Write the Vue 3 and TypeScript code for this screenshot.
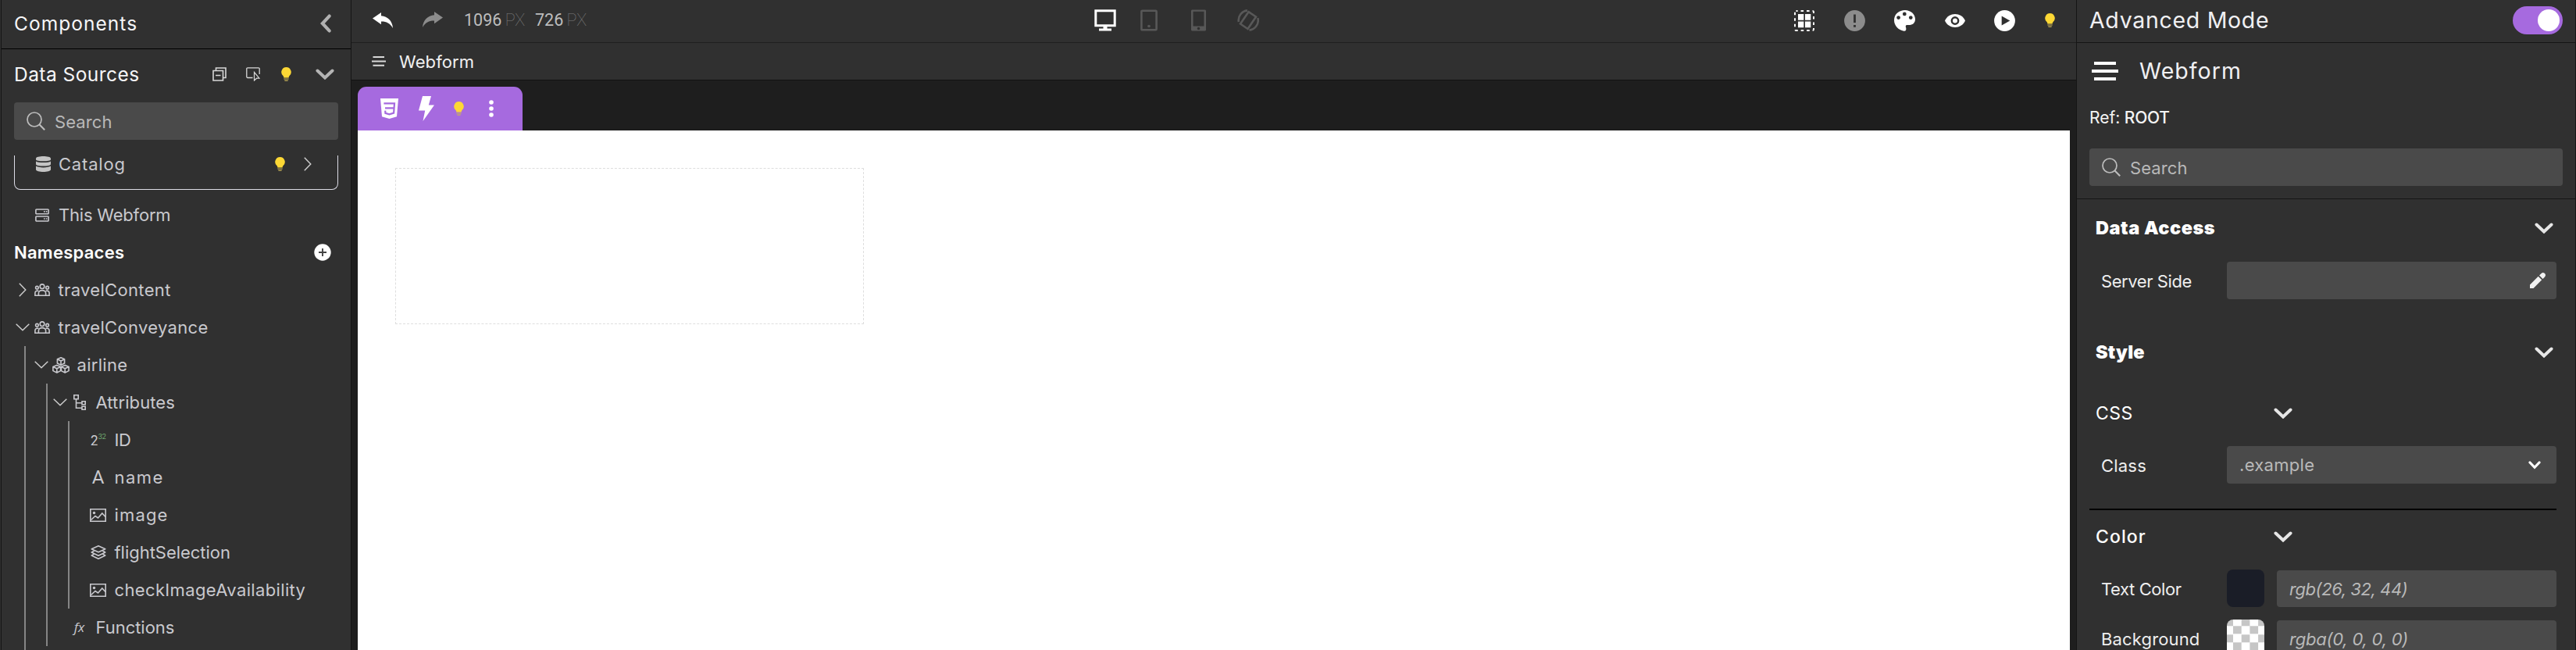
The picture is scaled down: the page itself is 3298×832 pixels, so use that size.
<script setup lang="ts">
interface TreeNode {
  label: string
  level: number
  icon: string
  open?: boolean
  closed?: boolean
}

const nodes: TreeNode[] = [
  { label: 'travelContent', level: 0, icon: 'users', closed: true },
  { label: 'travelConveyance', level: 0, icon: 'users', open: true },
  { label: 'airline', level: 1, icon: 'cubes', open: true },
  { label: 'Attributes', level: 2, icon: 'hierarchy', open: true },
  { label: 'ID', level: 3, icon: 'number' },
  { label: 'name', level: 3, icon: 'letter' },
  { label: 'image', level: 3, icon: 'picture' },
  { label: 'flightSelection', level: 3, icon: 'layers' },
  { label: 'checkImageAvailability', level: 3, icon: 'picture' },
  { label: 'Functions', level: 2, icon: 'fx' },
]
</script>

<template>
  <svg class="defs">
    <symbol id="bulb" viewBox="0 0 13 18">
      <path d="M6.5 0A6.3 6.3 0 0 0 2.6 11.2C3.2 11.8 3.3 12.6 3.3 13.6H9.7C9.7 12.6 9.8 11.8 10.4 11.2A6.3 6.3 0 0 0 6.5 0Z" fill="#fdd835" />
      <path d="M3.3 14.6H9.7V15.6H3.3ZM3.9 16.4H9.1L8.3 17.8H4.7Z" fill="#c9b458" />
    </symbol>
    <symbol id="down" viewBox="0 0 24 14">
      <path d="M2.5 2.5L12 11.5L21.5 2.5" fill="none" stroke="currentColor" stroke-width="4" stroke-linecap="round" />
    </symbol>
    <symbol id="thin-down" viewBox="0 0 18 10">
      <path d="M.7 .8L9 8.8L17.3 .8" fill="none" stroke="currentColor" stroke-width="1.4" />
    </symbol>
    <symbol id="thin-right" viewBox="0 0 10 18">
      <path d="M.8 .7L8.8 9L.8 17.3" fill="none" stroke="currentColor" stroke-width="1.4" />
    </symbol>
    <symbol id="search" viewBox="0 0 24 24">
      <circle cx="10" cy="10" r="9" fill="none" stroke="currentColor" stroke-width="1.7" />
      <path d="M16.3 16.3L23.2 23.2" stroke="currentColor" stroke-width="2.1" />
    </symbol>
    <symbol id="users" viewBox="0 0 20 16">
      <g fill="none" stroke="currentColor" stroke-width="1.6">
        <circle cx="10" cy="3.7" r="2.8" /><circle cx="3.4" cy="5.2" r="1.8" /><circle cx="16.6" cy="5.2" r="1.8" />
        <path d="M5.4 15.2V12.2A4.6 3.6 0 0 1 14.6 12.2V15.2ZM5.2 15.2H.9V12A2.9 2.9 0 0 1 5.4 9.6M14.8 15.2H19.1V12A2.9 2.9 0 0 0 14.6 9.6" />
      </g>
    </symbol>
    <symbol id="cubes" viewBox="0 0 22 21">
      <g fill="none" stroke="currentColor" stroke-width="1.6" stroke-linejoin="round">
        <path d="M11 .8L15.6 2.8V8L11 10.2L6.4 8V2.8ZM6.4 2.8L11 4.9L15.6 2.8M11 4.9V10.2" />
        <path d="M5.8 10.4L10.6 12.6V17.6L5.8 20L.9 17.6V12.6ZM.9 12.6L5.8 14.8L10.6 12.6M5.8 14.8V20" />
        <path d="M16.2 10.4L21.1 12.6V17.6L16.2 20L11.4 17.6V12.6ZM11.4 12.6L16.2 14.8L21.1 12.6M16.2 14.8V20" />
      </g>
    </symbol>
    <symbol id="hierarchy" viewBox="0 0 16 20">
      <path d="M.8 .8H6.2V5.8H.8ZM11 8.8H15.2V12.8H11ZM11 15.2H15.2V19.2H11ZM3.5 5.8V17.2H11M3.5 10.8H11" fill="none" stroke="currentColor" stroke-width="1.6" />
    </symbol>
    <symbol id="picture" viewBox="0 0 21 17">
      <path d="M.8 .8H20.2V16.2H.8Z" fill="none" stroke="currentColor" stroke-width="1.6" />
      <circle cx="5.5" cy="5.5" r="1.7" fill="currentColor" />
      <path d="M1.5 14.5L7 9.5L10.5 12L15.8 6L20 10.5" fill="none" stroke="currentColor" stroke-width="1.6" />
    </symbol>
    <symbol id="layers" viewBox="0 0 20 18">
      <path d="M10 .8L18.8 4.8L10 8.8L1.2 4.8ZM4.6 7L1.2 9L10 13.2L18.8 9L15.4 7M4.6 11.2L1.2 13L10 17.2L18.8 13L15.4 11.2" fill="none" stroke="currentColor" stroke-width="1.5" stroke-linejoin="round" />
    </symbol>
    <symbol id="lines" viewBox="0 0 34 24">
      <path d="M3 0H31V4H3ZM0 10H34V14H0ZM3 20H31V24H3Z" fill="currentColor" />
    </symbol>
  </svg>

  <div class="app">
    <aside class="left">
      <header class="components">
        <span class="t title comp">Components</span>
        <svg class="back" viewBox="0 0 14 24"><path d="M11.6 2.6L2.9 12L11.6 21.4" fill="none" stroke="#b0b0b0" stroke-width="4.2" stroke-linecap="round" /></svg>
      </header>
      <div class="sources">
        <span class="t title ds">Data Sources</span>
        <svg class="collapse" viewBox="0 0 18 18"><path d="M4.5 4V1H17V13.5H13.5M1 4.5H13.5V17H1ZM4 10.5H10.5" fill="none" stroke="currentColor" stroke-width="1.6" /></svg>
        <svg class="inspect" viewBox="0 0 18 18"><path d="M8.5 13.5H2A1.2 1.2 0 0 1 .8 12.3V2A1.2 1.2 0 0 1 2 .8H16A1.2 1.2 0 0 1 17.2 2V9" fill="none" stroke="currentColor" stroke-width="1.3" /><path d="M10.5 6.5L17 14.2H13.6L10.5 17Z" fill="none" stroke="currentColor" stroke-width="1.2" /></svg>
        <svg class="bulb"><use href="#bulb" /></svg>
        <svg class="down grey"><use href="#down" /></svg>
      </div>
      <div class="search">
        <svg class="lens"><use href="#search" /></svg>
        <span class="t find">Search</span>
      </div>
      <div class="catalog">
        <svg class="db" viewBox="0 0 19 20"><path d="M0 2.9C0 -.9 19 -.9 19 2.9V4.2C19 7 0 7 0 4.2ZM0 6.4C3 8.6 16 8.6 19 6.4V10.2C19 13.4 0 13.4 0 10.2ZM0 12.6C3 15 16 15 19 12.6V17C19 21 0 21 0 17Z" fill="#c4c4c4" /></svg>
        <span class="t cat">Catalog</span>
        <svg class="bulb"><use href="#bulb" /></svg>
        <svg class="chev-right"><use href="#thin-right" /></svg>
      </div>
      <div class="webform-row">
        <svg class="server" viewBox="0 0 18 17"><path d="M1.8 1H16.2A.9 .9 0 0 1 17.1 2V5.8A.9 .9 0 0 1 16.2 6.8H1.8A.9 .9 0 0 1 .9 5.8V2A.9 .9 0 0 1 1.8 1ZM1.8 10H16.2A.9 .9 0 0 1 17.1 11V15A.9 .9 0 0 1 16.2 16H1.8A.9 .9 0 0 1 .9 15V11A.9 .9 0 0 1 1.8 10Z" fill="none" stroke="currentColor" stroke-width="1.6" /><path d="M11 3.1H12.6V4.7H11ZM13.8 3.1H15.4V4.7H13.8ZM11 12.2H12.6V13.8H11ZM13.8 12.2H15.4V13.8H13.8Z" fill="currentColor" /></svg>
        <span class="t thisweb">This Webform</span>
      </div>
      <div class="namespaces">
        <span class="t ns">Namespaces</span>
        <svg class="plus" viewBox="0 0 22 22"><circle cx="11" cy="11" r="10.7" fill="#fff" /><path d="M11 6V16M6 11H16" stroke="#444" stroke-width="1.9" /></svg>
      </div>
      <div class="tree">
        <i class="guide g1"></i><i class="guide g2"></i><i class="guide g3"></i>
        <div v-for="n in nodes" :key="n.label" class="node" :class="'level' + n.level">
          <span class="slot chev">
            <svg v-if="n.open" class="chev-down"><use href="#thin-down" /></svg>
            <svg v-else-if="n.closed" class="chev-right"><use href="#thin-right" /></svg>
          </span>
          <span class="slot icon">
            <span v-if="n.icon === 'number'" class="num">2<sup>32</sup></span>
            <span v-else-if="n.icon === 'letter'" class="letter">A</span>
            <span v-else-if="n.icon === 'fx'" class="fx">fx</span>
            <svg v-else :class="n.icon"><use :href="'#' + n.icon" /></svg>
          </span>
          <span class="t label" :class="'n-' + n.label">{{ n.label }}</span>
        </div>
      </div>
    </aside>

    <main class="center">
      <div class="toolbar">
        <div class="history">
          <svg class="undo" viewBox="0 0 26 20"><path d="M0 7.6L11 0V4.2C19.5 5 25.5 11 26 20C22 13.6 17.5 11.4 11 11.6V15.2Z" fill="#fff" /></svg>
          <svg class="redo" viewBox="0 0 26 20"><path d="M26 7.6L15 0V4.2C6.5 5 .5 11 0 20C4 13.6 8.5 11.4 15 11.6V15.2Z" fill="#8c8c8c" /></svg>
          <span class="dim">1096 <small>PX</small></span>
          <span class="dim">726 <small>PX</small></span>
        </div>
        <div class="devices">
          <svg width="28" height="28" viewBox="0 0 28 28"><path d="M1.8 1.8H26.2V20.8H1.8Z" fill="none" stroke="#fff" stroke-width="3" /><path d="M11.5 21H16.5V24.5H22V27.5H6V24.5H11.5Z" fill="#fff" /></svg>
          <svg width="22" height="28" viewBox="0 0 22 28"><rect x="1.4" y="1.7" width="19.2" height="24.6" rx="1" fill="none" stroke="#585858" stroke-width="2.6" /><circle cx="11" cy="21.5" r="1.8" fill="#585858" /></svg>
          <svg width="19" height="28" viewBox="0 0 19 28"><path fill-rule="evenodd" d="M1 .5H18L19 1.5V26.5L18 27.5H1L0 26.5V1.5ZM2.5 2.8V21.5H16.5V2.8ZM9.5 22.7A1.8 1.8 0 1 0 9.5 26.3A1.8 1.8 0 1 0 9.5 22.7Z" fill="#585858" /></svg>
          <svg width="28" height="28" viewBox="0 0 28 28"><g fill="none" stroke="#585858" stroke-width="2.6"><path d="M14.5 3.2L24 9.5L13.5 25L4 18.5Z" /><path d="M13 1.4A12.7 12.7 0 0 0 1.8 16M15.5 26.6A12.7 12.7 0 0 0 26.4 11" /></g></svg>
        </div>
        <div class="actions">
          <svg width="26" height="27" viewBox="0 0 26 27"><rect x="1" y="1" width="24" height="25" rx="1.5" fill="none" stroke="#fff" stroke-width="2" stroke-dasharray="3.6 3.9" stroke-dashoffset="1.5" /><path d="M5 5H12.3V12.7H5ZM14 5H21.3V12.7H14ZM5 14.5H12.3V22.2H5ZM14 14.5H21.3V22.2H14Z" fill="#fff" /></svg>
          <svg width="27" height="27" viewBox="0 0 27 27"><circle cx="13.5" cy="13.5" r="13.4" fill="#8c8c8c" /><path d="M12.1 5.5H14.9V16H12.1ZM12.1 19H14.9V21.8H12.1Z" fill="#303030" /></svg>
          <svg width="27" height="27" viewBox="0 0 27 27"><path fill-rule="evenodd" d="M14 0C21 0 27 5 27 11.5C27 17 23 19.5 17.5 19C14.5 18.8 14.5 20.5 15.2 22.5C16 25.5 14.5 27 12.5 26.7C5.5 25.8 0 19.5 0 13C0 5 6.5 0 14 0ZM13.3 2.5A2.4 2.4 0 1 0 13.3 7.3A2.4 2.4 0 1 0 13.3 2.5ZM5.6 7.2A2.4 2.4 0 1 0 5.6 12A2.4 2.4 0 1 0 5.6 7.2ZM21.3 7.2A2.4 2.4 0 1 0 21.3 12A2.4 2.4 0 1 0 21.3 7.2Z" fill="#fff" /></svg>
          <svg width="26" height="17" viewBox="0 0 26 17"><path d="M0 8.5C5 -2.8 21 -2.8 26 8.5C21 19.8 5 19.8 0 8.5Z" fill="#fff" /><circle cx="13" cy="8.5" r="4.2" fill="#fff" stroke="#303030" stroke-width="2.4" /></svg>
          <svg width="27" height="27" viewBox="0 0 27 27"><circle cx="13.5" cy="13.5" r="13.4" fill="#fff" /><path d="M9.7 7.5L20.3 13.5L9.7 19.5Z" fill="#303030" /></svg>
          <svg class="bulb"><use href="#bulb" /></svg>
        </div>
      </div>
      <div class="crumb">
        <svg class="lines-sm" viewBox="0 0 18 13"><path d="M1.5 0H16V2H1.5ZM0 5.4H18V7.4H0ZM1.5 10.8H16V12.8H1.5Z" fill="#d8d8d8" /></svg>
        <span class="t crumb-t">Webform</span>
      </div>
      <div class="stage">
        <div class="tab">
          <svg class="css3" viewBox="0 0 23 26"><path d="M0 0H23L21 23.2L11.5 26L2 23.2Z" fill="#fff" /><path d="M4.4 6.4H18L17.1 18.6L11.5 20.4L6.4 18.9L6.2 15.6M6 12.4H17.4" fill="none" stroke="#a66adf" stroke-width="2.2" /></svg>
          <svg class="bolt" viewBox="0 0 20 32"><path d="M5 0H16L12.8 11.5H20L5.5 32L8.2 18.5H0Z" fill="#fff" /></svg>
          <svg class="bulb"><use href="#bulb" /></svg>
          <svg class="dots" viewBox="0 0 6 22"><circle cx="3" cy="3" r="2.8" fill="#fff" /><circle cx="3" cy="11" r="2.8" fill="#fff" /><circle cx="3" cy="19" r="2.8" fill="#fff" /></svg>
        </div>
        <div class="canvas"><div class="drop"></div></div>
      </div>
    </main>

    <aside class="right">
      <header class="mode">
        <span class="t big adv">Advanced Mode</span>
        <span class="toggle"><i></i></span>
      </header>
      <div class="heading">
        <svg class="lines"><use href="#lines" /></svg>
        <span class="t big wf">Webform</span>
      </div>
      <div class="refrow"><span class="t ref">Ref:</span><b class="t root">ROOT</b></div>
      <div class="search rsearch">
        <svg class="lens"><use href="#search" /></svg>
        <span class="t find">Search</span>
      </div>
      <div class="section s-data"><b class="t da">Data Access</b><svg class="down"><use href="#down" /></svg></div>
      <div class="field f-server">
        <span class="t name ss">Server Side</span>
        <div class="input end"><svg class="pencil" viewBox="0 0 20 20"><path d="M0 15.5V20H4.5L15.2 9.3L10.7 4.8ZM12 3.5L16.5 8L19 5.4C20.3 4 20.3 2.4 19 1.1C17.6 -.3 16 -.3 14.6 .9Z" fill="#f2f2f2" /></svg></div>
      </div>
      <div class="section s-style"><b class="t st">Style</b><svg class="down"><use href="#down" /></svg></div>
      <div class="sub s-css"><span class="t css">CSS</span><svg class="down"><use href="#down" /></svg></div>
      <div class="field f-class">
        <span class="t name cl">Class</span>
        <div class="input"><span class="t ex">.example</span><svg class="caret" viewBox="0 0 16 11"><path d="M2 2L8 8.3L14 2" fill="none" stroke="#fff" stroke-width="3.2" stroke-linecap="round" /></svg></div>
      </div>
      <hr class="rule" />
      <div class="sub s-color"><span class="t co">Color</span><svg class="down"><use href="#down" /></svg></div>
      <div class="field f-text">
        <span class="t name tc">Text Color</span>
        <i class="swatch navy"></i>
        <div class="input short"><em class="t v1">rgb(26, 32, 44)</em></div>
      </div>
      <div class="field f-bg">
        <span class="t name bg">Background</span>
        <i class="swatch checker"></i>
        <div class="input short"><em class="t v2">rgba(0, 0, 0, 0)</em></div>
      </div>
    </aside>
  </div>
</template>

<style>
html, body { margin: 0; overflow: hidden; background: #1e1e1e; }
</style>

<style scoped>
* { box-sizing: border-box; }
svg { display: block; flex: none; }
.defs { position: absolute; width: 0; height: 0; }
.t { white-space: pre; }
.app { display: flex; width: 3298px; height: 832px; overflow: hidden; background: #1e1e1e; color: #c9c9ce; font-family: Inter, "Open Sans", sans-serif; font-size: 22px; line-height: 28px; }
.left { flex: none; width: 450px; height: 832px; overflow: hidden; padding-left: 1px; border-left: 1px solid #303030; border-right: 1px solid #151515; background: #303030; box-shadow: inset 1px 0 #151515; }
.title { font-size: 24.5px; color: #f6f6f8; }
.components { display: flex; align-items: center; justify-content: space-between; height: 63px; padding: 0 25px 2px 16px; border-bottom: 1px solid #000; }
.comp { letter-spacing: 1.05px; }
.back { width: 14px; height: 24px; }
.sources { display: flex; align-items: center; height: 68px; padding: 0 20px 4px 16px; color: #d8d8d8; }
.ds { width: 254px; letter-spacing: .45px; }
.collapse { width: 18px; height: 18px; }
.inspect { width: 18px; height: 18px; margin-left: 25px; }
.bulb { width: 13px; height: 18px; }
.sources .bulb { margin-left: 27px; }
.down { width: 24px; height: 14px; color: #e6e6e6; }
.down.grey { color: #b4b4b4; margin-left: 31px; }
.search { display: flex; align-items: center; gap: 12px; height: 48px; margin: 0 16px; padding-left: 16px; border-radius: 4px; background: #4a4a4a; color: #b9b9b9; }
.find { padding-top: 1px; letter-spacing: .1px; }
.lens { width: 24px; height: 24px; color: #bdbdbd; }
.catalog { display: flex; align-items: center; height: 44px; margin: 20px 16px 0; padding: 0 33px 21px 27px; border: 1px solid #dcdce6; border-top: 0; border-radius: 0 0 8px 8px; }
.db { width: 19px; height: 20px; margin-right: 10px; }
.cat { letter-spacing: .8px; }
.catalog .bulb { margin-left: auto; margin-right: 24px; }
.chev-right { width: 10px; height: 18px; color: #d0d0d0; }
.chev-down { width: 18px; height: 10px; color: #d0d0d0; }
.webform-row { display: flex; align-items: center; height: 64px; padding-left: 43px; }
.server { width: 18px; height: 17px; margin-right: 12px; }
.thisweb { letter-spacing: -.2px; }
.namespaces { display: flex; align-items: center; justify-content: space-between; height: 40px; padding: 0 25px 8px 16px; color: #fff; font-weight: 600; }
.ns { letter-spacing: .25px; }
.plus { width: 22px; height: 22px; }
.tree { position: relative; }
.guide { position: absolute; width: 2px; background: #858585; }
.g1 { left: 29px; top: 96px; bottom: -40px; }
.g2 { left: 57px; top: 144px; height: 336px; }
.g3 { left: 85px; top: 192px; height: 240px; }
.node { display: flex; align-items: center; height: 48px; padding-left: 13.5px; }
.level1 { padding-left: 37.5px; }
.level2 { padding-left: 61.5px; }
.level3 { padding-left: 85.5px; }
.slot { flex: none; display: flex; justify-content: center; align-items: center; height: 28px; }
.slot.chev { width: 26px; }
.slot.icon { width: 28px; margin-right: 7px; margin-left: -2px; }
.n-travelContent { letter-spacing: .33px; }
.n-travelConveyance { letter-spacing: .33px; }
.n-airline { letter-spacing: .3px; }
.n-Attributes { letter-spacing: .1px; }
.n-ID { letter-spacing: -.5px; }
.n-name { letter-spacing: 1.5px; }
.n-image { letter-spacing: 1.15px; }
.n-flightSelection { letter-spacing: -.03px; }
.n-checkImageAvailability { letter-spacing: .36px; }
.n-Functions { letter-spacing: -.03px; }
.users { width: 20px; height: 16px; }
.cubes { width: 22px; height: 21px; }
.hierarchy { width: 16px; height: 20px; }
.picture { width: 21px; height: 17px; }
.layers { width: 20px; height: 18px; }
.num { font-size: 17px; line-height: 20px; padding-top: 2px; letter-spacing: -.5px; }
.num sup { font-size: 9px; line-height: 1; color: #6fa86f; vertical-align: 8px; }
.letter { font: 400 24px/24px Roboto, sans-serif; }
.fx { font: italic 400 17px/20px "Open Sans", sans-serif; }

.center { flex: none; width: 2208px; height: 832px; display: flex; flex-direction: column; }
.toolbar { flex: none; display: flex; align-items: center; height: 55px; padding: 0 27px 2px 27px; border-bottom: 1px solid #1f1f1f; background: #303030; }
.history { display: flex; align-items: center; width: 924px; }
.undo, .redo { width: 26px; height: 20px; }
.redo { margin: 0 27px 2px 38px; }
.dim { width: 91px; font: 400 21.5px/26px Roboto, sans-serif; color: #bdbdbd; }
.dim small { margin-left: -1px; font-size: 21.5px; font-weight: 100; color: #7c7c7c; }
.devices { display: flex; align-items: center; }
.devices svg:nth-child(2) { margin-left: 31px; }
.devices svg:nth-child(3) { margin-left: 43px; }
.devices svg:nth-child(4) { margin-left: 40px; }
.actions { display: flex; align-items: center; gap: 37.6px; margin-left: auto; }
.crumb { flex: none; display: flex; align-items: center; height: 48px; padding-left: 26px; border-bottom: 1px solid #121212; background: #303030; color: #f0f0f0; }
.crumb-t { letter-spacing: .1px; }
.lines-sm { width: 18px; height: 13px; margin-right: 17px; }
.stage { flex: 1; display: flex; flex-direction: column; min-height: 0; padding: 8px 8px 0; background: #1e1e1e; }
.tab { flex: none; display: flex; align-items: center; width: 211px; height: 56px; padding-left: 29px; border-radius: 11px 11px 0 0; background: #a66adf; }
.css3 { width: 23px; height: 26px; }
.bolt { width: 20px; height: 32px; margin: 0 25px 0 26px; }
.dots { width: 6px; height: 22px; margin-left: 32px; }
.canvas { flex: 1; padding: 48px; background: #fff; }
.drop { width: 600px; height: 200px; border: 1px dashed #dedede; }

.right { flex: none; width: 640px; height: 832px; overflow: hidden; border-left: 1px solid #151515; border-right: 1px solid #151515; background: #303030; color: #eee; }
.big { font-size: 28.5px; line-height: 36px; color: #f0f0f3; }
.adv { letter-spacing: .7px; }
.mode { display: flex; align-items: center; justify-content: space-between; height: 55px; padding: 0 16px 2px 16px; border-bottom: 1px solid #151515; }
.toggle { display: flex; justify-content: flex-end; align-items: center; width: 64px; height: 36px; padding-right: 4px; border-radius: 18px; background: #a66adf; }
.toggle i { width: 28px; height: 28px; border-radius: 50%; background: #fff; }
.heading { display: flex; align-items: center; height: 72px; padding-left: 19px; }
.lines { width: 34px; height: 24px; color: #fff; }
.wf { margin-left: 27px; letter-spacing: 1.05px; }
.refrow { display: flex; height: 63px; padding: 10px 0 0 16px; color: #f4f4f4; font-size: 21px; }
.root { margin-left: 5.5px; font-weight: 500; letter-spacing: -.2px; }
.rsearch { margin: 0 16px; }
.section { display: flex; align-items: center; justify-content: space-between; padding: 0 28px 0 24px; color: #fff; font-size: 23.5px; font-weight: 700; }
.da { letter-spacing: .55px; }
.st { letter-spacing: .2px; }
.s-data { height: 75px; margin-top: 16px; border-top: 1px solid #151515; }
.field { display: flex; align-items: center; height: 48px; padding: 0 24px 0 31px; }
.name { flex: none; width: 161px; padding-top: 1px; }
.ss { letter-spacing: -.42px; }
.cl { letter-spacing: .2px; }
.tc { letter-spacing: -.4px; }
.bg { letter-spacing: .15px; }
.input { display: flex; align-items: center; justify-content: space-between; flex: 1; height: 48px; padding: 0 20px 0 16px; border-radius: 4px; background: #4a4a4a; color: #b9b9b9; }
.input.end { justify-content: flex-end; padding-right: 14px; }
.input.short { align-self: flex-end; height: 47px; margin-left: 16px; }
.ex { letter-spacing: .3px; }
.v1 { letter-spacing: -.43px; }
.v2 { letter-spacing: -.23px; }
.pencil { width: 20px; height: 20px; }
.f-server { margin-top: 6px; }
.s-style { height: 40px; margin-top: 48px; }
.sub { display: flex; align-items: center; height: 40px; padding-left: 24px; color: #fff; font-size: 23px; }
.sub .t { width: 228px; }
.css { letter-spacing: .5px; }
.co { letter-spacing: 1.1px; }
.s-css { margin-top: 38px; }
.f-class { margin-top: 22px; }
.caret { width: 16px; height: 11px; }
.rule { height: 2px; margin: 32px 24px 14px 16px; border: 0; background: #000; }
.s-color { font-weight: 500; }
.f-text { margin-top: 22px; }
.f-bg { margin-top: 16px; }
.swatch { flex: none; width: 48px; height: 48px; border-radius: 8px; }
.navy { background: #1a1d27; }
.checker { background: repeating-conic-gradient(#c6c6c6 0 25%, #fff 0 50%) -2.7px 8.3px / 21.4px 21px; }
</style>
